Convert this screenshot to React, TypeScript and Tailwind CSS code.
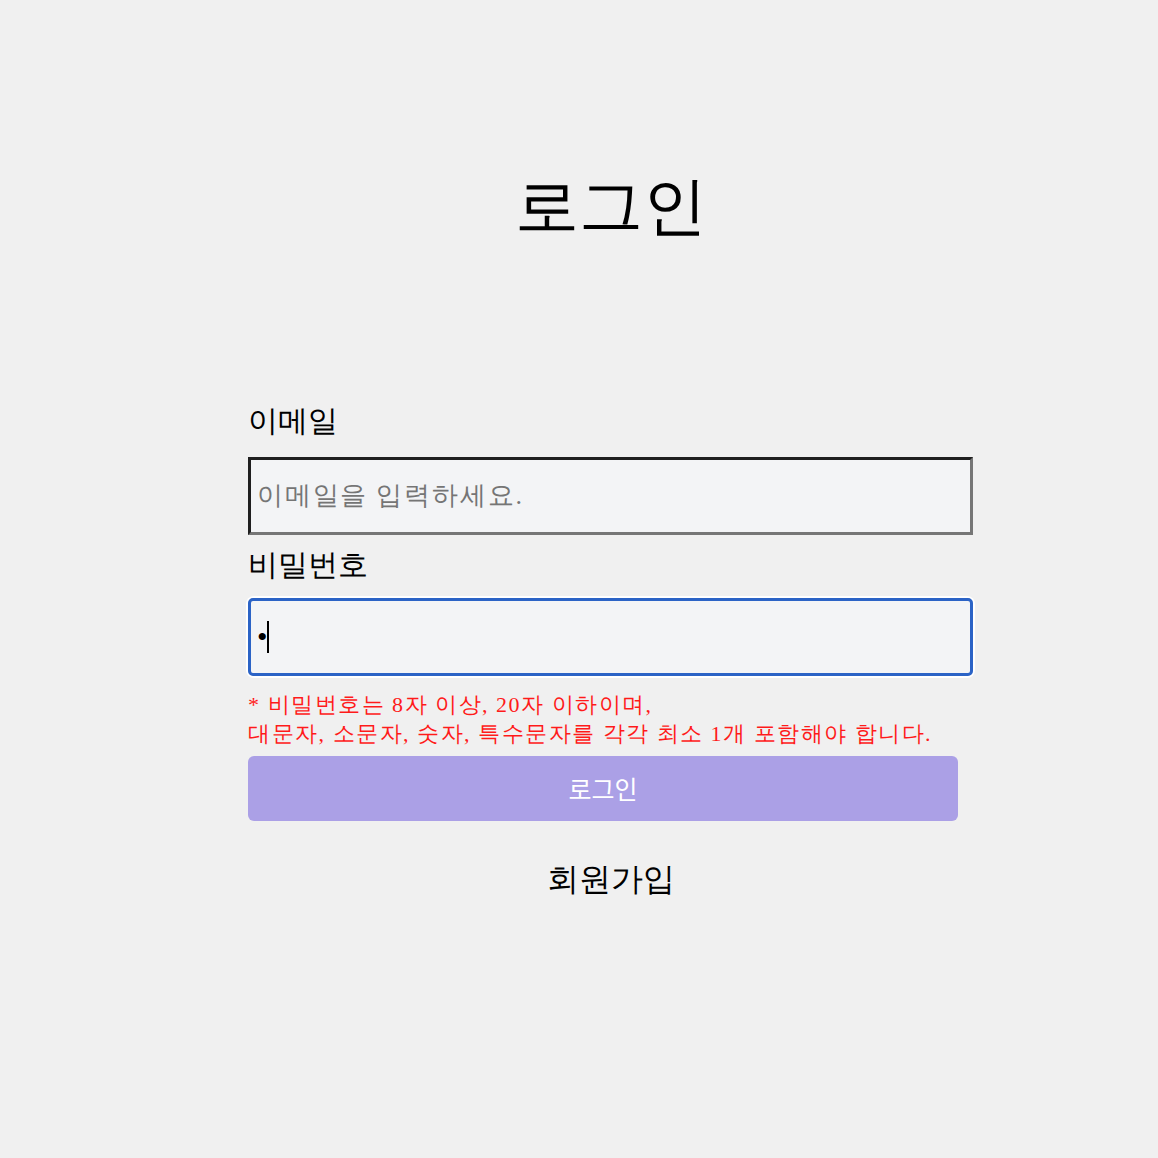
export default function App() {
  return (
    <div className="min-h-[1158px] bg-[#f0f0f0] font-['Liberation_Serif',serif] text-black">
      <div className="ml-[248px] w-[725px] pt-[167px]">
        <h1 className="text-center text-[64px] leading-[80px]">로그인</h1>

        <div className="mt-[154px] flex flex-col">
          <label className="text-[30px] leading-[40px]">이메일</label>
          <input
            type="email"
            placeholder="이메일을 입력하세요."
            className="mt-[16px] h-[78px] w-full border-[3px] border-t-[#1f1f1f] border-l-[#1f1f1f] border-b-[#767676] border-r-[#767676] bg-[#f3f4f6] px-[6px] text-[26px] tracking-[1.8px] outline-none placeholder:text-[#757575]"
          />
          <label className="mt-[10px] text-[30px] leading-[40px]">비밀번호</label>
          <div className="mt-[13px] rounded-[6px] ring-2 ring-white">
            <div className="flex h-[78px] items-center rounded-[5px] border-[3px] border-[#2b63c6] bg-[#f3f4f6] px-[6px]">
              <span className="text-[30px] leading-none">•</span>
              <span className="ml-[-1px] h-[32px] w-[2px] bg-black" />
            </div>
          </div>
          <p className="mt-[14px] text-[22px] leading-[29px] tracking-[1.5px] text-[#ff1a1a]">
            * 비밀번호는 8자 이상, 20자 이하이며,
            <br />
            대문자, 소문자, 숫자, 특수문자를 각각 최소 1개 포함해야 합니다.
          </p>
          <button className="mt-[8px] h-[65px] w-[710px] rounded-[6px] bg-[#aba0e6] font-['Noto_Sans_CJK_KR',sans-serif] text-[25px] text-white">
            로그인
          </button>
          <div className="mt-[34px] text-center text-[32px]">회원가입</div>
        </div>
      </div>
    </div>
  );
}
